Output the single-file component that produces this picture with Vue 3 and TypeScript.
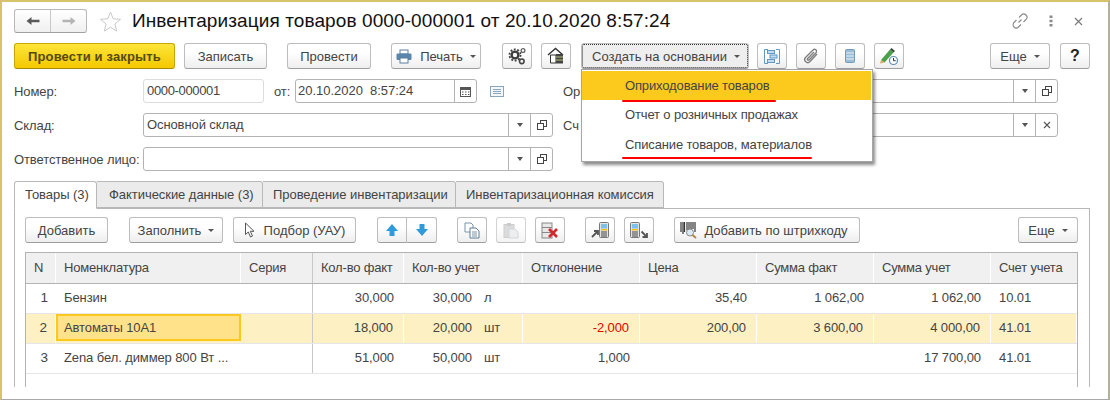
<script setup lang="ts">
interface Row {
  n: number
  name: string
  fact: string
  acc: string
  unit: string
  diff: string
  price: string
  sumF: string
  sumA: string
  account: string
  active?: boolean
}

const rows: Row[] = [
  { n: 1, name: 'Бензин', fact: '30,000', acc: '30,000', unit: 'л', diff: '', price: '35,40', sumF: '1 062,00', sumA: '1 062,00', account: '10.01' },
  { n: 2, name: 'Автоматы 10А1', fact: '18,000', acc: '20,000', unit: 'шт', diff: '-2,000', price: '200,00', sumF: '3 600,00', sumA: '4 000,00', account: '41.01', active: true },
  { n: 3, name: 'Zena бел. диммер 800 Вт ...', fact: '51,000', acc: '50,000', unit: 'шт', diff: '1,000', price: '', sumF: '', sumA: '17 700,00', account: '41.01' },
]
const heads = ['N', 'Номенклатура', 'Серия', 'Кол-во факт', 'Кол-во учет', 'Отклонение', 'Цена', 'Сумма факт', 'Сумма учет', 'Счет учета']
const tabs = ['Товары (3)', 'Фактические данные (3)', 'Проведение инвентаризации', 'Инвентаризационная комиссия']
</script>

<template>
  <div class="window">
    <header class="head">
      <div class="nav">
        <span class="nav-cell">
          <svg width="16" height="12" viewBox="0 0 16 12"><path d="M1.500 6 6.500 2V4.700H14.500V7.300H6.500V10Z" fill="#5a5a5a" /></svg>
        </span>
        <span class="nav-cell">
          <svg width="16" height="12" viewBox="0 0 16 12"><path d="M14.500 6 9.500 2V4.700H1.500V7.300H9.500V10Z" fill="#b4b4b4" /></svg>
        </span>
      </div>
      <svg class="star" width="23" height="23" viewBox="0 0 23 23"><path d="M11.500 2 14.200 8.800 21.500 9.300 15.900 14 17.700 21.100 11.500 17.200 5.300 21.100 7.100 14 1.500 9.300 8.800 8.800Z" fill="#fff" stroke="#c9c9c9" /></svg>
      <h1 class="title">Инвентаризация товаров 0000-000001 от 20.10.2020 8:57:24</h1>
      <div class="win-tools">
        <svg width="16" height="16" viewBox="0 0 16 16" fill="none" stroke="#8a8a8a" stroke-width="1.100"><path d="M6.500 9.500 9.500 6.500M7 4.500 9.500 2a2.800 2.800 0 0 1 4.500 4.500L11.500 9M9 11.500 6.500 14A2.800 2.800 0 0 1 2 9.500L4.500 7" /></svg>
        <svg class="dots" width="4" height="12" viewBox="0 0 4 12"><path d="M.5.500h3v2.500h-3zM.5 4.700h3v2.500h-3zM.5 8.900h3v2.500h-3z" fill="#8a8a8a" /></svg>
        <svg class="close" width="9" height="9" viewBox="0 0 9 9"><path d="M1 1 8 8M8 1 1 8" stroke="#777" stroke-width="1.100" /></svg>
      </div>
    </header>

    <div class="cmd">
      <button class="btn primary w161">Провести и закрыть</button>
      <button class="btn w83 g9">Записать</button>
      <button class="btn w84 g20">Провести</button>
      <button class="btn w90 g20">
        <svg width="16" height="15" viewBox="0 0 16 15"><rect x="4" y="1" width="8" height="4" fill="#fff" stroke="#5b7f9f" /><rect x=".5" y="4.500" width="15" height="6.500" rx="1" fill="#5b86ab" /><rect x="4" y="9" width="8" height="5" fill="#fff" stroke="#5b7f9f" /></svg>
        <span class="ico-label">Печать</span><i class="caret" />
      </button>
      <button class="btn icon g21">
        <svg width="18" height="18" viewBox="0 0 18 18"><circle cx="7" cy="8" r="3.400" fill="none" stroke="#3c3c3c" stroke-width="2.400" /><circle cx="7" cy="8" r="5.600" fill="none" stroke="#3c3c3c" stroke-width="1.700" stroke-dasharray="1.900 1.600" /><circle cx="15" cy="3.500" r="1.900" fill="none" stroke="#666" stroke-width="1.300" /><circle cx="13.800" cy="14.300" r="2.300" fill="none" stroke="#444" stroke-width="1.600" /></svg>
      </button>
      <button class="btn icon g9">
        <svg width="18" height="18" viewBox="0 0 18 18"><path d="M1 8 8.500 1.500 16 8" fill="none" stroke="#333" stroke-width="1.400" /><path d="M3.500 8V16H9V8Z" fill="#fff" stroke="#333" /><rect x="9" y="7" width="7" height="9.500" fill="#444" /><path d="M9 10h7M9 13h7" stroke="#b9c27a" /></svg>
      </button>
      <button class="btn create g10"><span>Создать на основании</span><i class="caret" /></button>
      <button class="btn icon g8">
        <svg width="16" height="15" viewBox="0 0 16 15" fill="none" stroke="#5f9ac8"><path d="M4 .5H.5V14.500H4M12 .5H15.500V14.500H12" /><rect x="3.500" y="1.500" width="7" height="3" fill="#c4dcef" /><rect x="6" y="6" width="7" height="3" fill="#c4dcef" /><rect x="3.500" y="10.500" width="7" height="3" fill="#c4dcef" /></svg>
      </button>
      <button class="btn icon g9">
        <svg width="18" height="18" viewBox="0 0 18 18" fill="none" stroke="#7e7e7e" stroke-width="1.300"><path d="M15 7 8 14.500a3 3 0 0 1-4.500-4L11 3a2 2 0 0 1 3 2.700L7 13a1 1 0 0 1-1.500-1.300L12 5" /></svg>
      </button>
      <button class="btn icon g9">
        <svg width="10" height="14" viewBox="0 0 10 14"><rect x=".5" y=".5" width="9" height="13" rx="1" fill="#9dbcd6" stroke="#6f9abb" /><path d="M1 4h8M1 7h8M1 10h8" stroke="#e8f0f6" stroke-width="1.100" /></svg>
      </button>
      <button class="btn icon g9">
        <svg width="20" height="19" viewBox="0 0 20 19"><path d="M2 13 11 2.500 14.500 5.500 5.500 15.500Z" fill="#4aa14a" /><path d="M2 13 1 16.500 5.500 15.500Z" fill="#d8a964" /><path d="M11 2.500 12.500 1 16 4 14.500 5.500Z" fill="#3b4a3b" /><circle cx="14.500" cy="13.500" r="4" fill="#fff" stroke="#5e8db3" stroke-width="1.200" /><path d="M14.500 11v2.700h2.200" fill="none" stroke="#333" /></svg>
      </button>
      <button class="btn w60 push"><span>Еще</span><i class="caret" /></button>
      <button class="btn icon g10 help">?</button>

      <div class="menu">
        <div class="menu-item on">Оприходование товаров</div>
        <div class="menu-item">Отчет о розничных продажах</div>
        <div class="menu-item">Списание товаров, материалов</div>
        <span class="mark mark-a" />
        <span class="mark mark-b" />
      </div>
    </div>

    <div class="form">
      <div class="line">
        <label class="lbl">Номер:</label>
        <div class="field plain num">0000-000001</div>
        <label class="from">от:</label>
        <div class="field date">
          <span class="val dateval">20.10.2020&nbsp; 8:57:24</span>
          <span class="fb cal">
            <svg width="13" height="13" viewBox="0 0 13 13"><rect x="1.500" y="2.500" width="10" height="9" fill="#fff" stroke="#555" /><rect x="1" y="2" width="11" height="3" fill="#555" /><path d="M3 7h1.500M6 7h1.500M9 7h1.500M3 9.500h1.500M6 9.500h1.500M9 9.500h1.500" stroke="#555" /></svg>
          </span>
        </div>
        <svg class="note" width="14" height="11" viewBox="0 0 14 11"><rect x=".5" y=".5" width="13" height="10" fill="#f4f7fa" stroke="#8ba5ba" /><path d="M3 3.500h8M3 5.500h8M3 7.500h8" stroke="#8ba5ba" /></svg>
        <label class="lbl2">Ор</label>
        <div class="field side">
          <span class="val" />
          <span class="fb w21"><i class="tri" /></span>
          <span class="fb w21">
            <svg width="10" height="10" viewBox="0 0 10 10" fill="#fff" stroke="#444"><rect x="3.500" y=".5" width="6" height="6" /><rect x=".5" y="3.500" width="6" height="6" /></svg>
          </span>
        </div>
      </div>
      <div class="line">
        <label class="lbl">Склад:</label>
        <div class="field main">
          <span class="val">Основной склад</span>
          <span class="fb w21"><i class="tri" /></span>
          <span class="fb w21">
            <svg width="10" height="10" viewBox="0 0 10 10" fill="#fff" stroke="#444"><rect x="3.500" y=".5" width="6" height="6" /><rect x=".5" y="3.500" width="6" height="6" /></svg>
          </span>
        </div>
        <label class="lbl2">Сч</label>
        <div class="field side">
          <span class="val" />
          <span class="fb w21"><i class="tri" /></span>
          <span class="fb w21">
            <svg width="8" height="8" viewBox="0 0 8 8"><path d="M1 1 7 7M7 1 1 7" stroke="#555" stroke-width="1.100" /></svg>
          </span>
        </div>
      </div>
      <div class="line">
        <label class="lbl">Ответственное лицо:</label>
        <div class="field main">
          <span class="val" />
          <span class="fb w21"><i class="tri" /></span>
          <span class="fb w21">
            <svg width="10" height="10" viewBox="0 0 10 10" fill="#fff" stroke="#444"><rect x="3.500" y=".5" width="6" height="6" /><rect x=".5" y="3.500" width="6" height="6" /></svg>
          </span>
        </div>
      </div>
    </div>

    <div class="tabs">
      <div v-for="(t, i) in tabs" :key="t" class="tab" :class="['tab' + i, { cur: i === 0 }]">{{ t }}</div>
    </div>

    <section class="panel">
      <div class="tools">
        <button class="btn w83">Добавить</button>
        <button class="btn w94 g21"><span>Заполнить</span><i class="caret" /></button>
        <button class="btn w123 g10">
          <svg width="12" height="16" viewBox="0 0 12 16"><path d="M1.500 1V12.500L4.300 10 6.500 15 8.500 14 6.300 9.300H10Z" fill="#fff" stroke="#555" /></svg>
          <span class="ico-label">Подбор (УАУ)</span>
        </button>
        <div class="pair g21">
          <button class="btn half">
            <svg width="14" height="14" viewBox="0 0 14 14"><path d="M7 1 13 8H9.500V13H4.500V8H1Z" fill="#2f9bdc" /></svg>
          </button>
          <button class="btn half joined">
            <svg width="14" height="14" viewBox="0 0 14 14"><path d="M7 13 13 6H9.500V1H4.500V6H1Z" fill="#2f9bdc" /></svg>
          </button>
        </div>
        <button class="btn icon g20">
          <svg width="16" height="17" viewBox="0 0 16 17"><path d="M1 1H7L9 3V10H1Z" fill="#fff" stroke="#7d93a6" /><path d="M6 6H12L15 9V16H6Z" fill="#fff" stroke="#5f7d96" /><path d="M8 10h5M8 12h5M8 14h5" stroke="#7d93a6" /></svg>
        </button>
        <button class="btn icon g9 off">
          <svg width="16" height="17" viewBox="0 0 16 17"><rect x="1" y="2.500" width="10" height="13" fill="#c9c9c9" stroke="#b5b5b5" /><rect x="4" y="1" width="4" height="3" fill="#b0b0b0" /><path d="M6 7H12L15 10V16H6Z" fill="#e3e6e9" stroke="#b9c0c6" /></svg>
        </button>
        <button class="btn icon g9">
          <svg width="18" height="17" viewBox="0 0 18 17"><rect x="1" y="1" width="10" height="15" fill="#e8e8e8" stroke="#888" /><path d="M1 5.500h10M1 10.500h10" stroke="#888" /><path d="M8 7 16 15M16 7 8 15" stroke="#d4282a" stroke-width="2.600" /></svg>
        </button>
        <button class="btn icon g20">
          <svg width="20" height="18" viewBox="0 0 20 18"><rect x="9.500" y="1.500" width="9" height="15" rx="1" fill="#e4e4e4" stroke="#777" /><rect x="11" y="3" width="6" height="4.500" fill="#7fc0e8" /><rect x="11" y="8" width="6" height="1.500" fill="#f0c020" /><path d="M11 11h6M11 13h6M11 15h6" stroke="#444" /><path d="M2 16 7.500 10.500M4 10H8V14" fill="none" stroke="#555" stroke-width="1.800" /></svg>
        </button>
        <button class="btn icon g9">
          <svg width="20" height="18" viewBox="0 0 20 18"><rect x="1.500" y="1.500" width="9" height="15" rx="1" fill="#e4e4e4" stroke="#777" /><rect x="3" y="3" width="6" height="4.500" fill="#7fc0e8" /><rect x="3" y="8" width="6" height="1.500" fill="#f0c020" /><path d="M3 11h6M3 13h6M3 15h6" stroke="#444" /><path d="M12.500 10.500 18 16M13.500 16H18V12" fill="none" stroke="#555" stroke-width="1.800" /></svg>
        </button>
        <button class="btn w186 g20">
          <svg width="18" height="18" viewBox="0 0 18 18"><path d="M1 1V11M3 1V13M4.500 1V11M7 1V9M9 1V8M11 1V8M13 1V8M15 1V11" stroke="#333" stroke-width="1.200" /><circle cx="10" cy="11.500" r="3.500" fill="#dbe9f3" stroke="#888" /><path d="M12.500 14 16 17" stroke="#b8863b" stroke-width="2" /></svg>
          <span class="ico-label tight">Добавить по штрихкоду</span>
        </button>
        <button class="btn w60 push"><span>Еще</span><i class="caret" /></button>
      </div>

      <div class="table">
        <div class="tr th">
          <div v-for="h in heads" :key="h" class="td">{{ h }}</div>
        </div>
        <div v-for="r in rows" :key="r.n" class="tr body" :class="{ active: r.active }">
          <div class="td right idx">{{ r.n }}</div>
          <div class="td name" :class="{ cursor: r.active }">{{ r.name }}</div>
          <div class="td" />
          <div class="td right">{{ r.fact }}</div>
          <div class="td acc"><span class="acc-num">{{ r.acc }}</span><span class="unit">{{ r.unit }}</span></div>
          <div class="td right" :class="{ neg: r.diff.startsWith('-') }">{{ r.diff }}</div>
          <div class="td right">{{ r.price }}</div>
          <div class="td right">{{ r.sumF }}</div>
          <div class="td right">{{ r.sumA }}</div>
          <div class="td">{{ r.account }}</div>
        </div>
      </div>
    </section>
  </div>
</template>

<style scoped>
.window {
  position: relative;
  box-sizing: border-box;
  width: 1110px;
  height: 400px;
  overflow: hidden;
  background: #fff;
  border-top: 2px solid #d6c36a;
  border-left: 2px solid #d6c36a;
  border-right: 2px solid #b4b09a;
  border-bottom: 1px solid #a8a8a8;
  padding: 7px 0 0 12px;
  font-family: "Liberation Sans", Arial, sans-serif;
  font-size: 13px;
  letter-spacing: -.1px;
  color: #444;
}
.head {
  display: flex;
  align-items: center;
  height: 24px;
  width: 1076px;
}
.nav {
  display: flex;
  box-sizing: border-box;
  width: 73px;
  height: 24px;
  border: 1px solid #b8b8b8;
  border-bottom-color: #a0a0a0;
  border-radius: 3px;
  background: linear-gradient(#fff, #f0f0f0);
}
.nav-cell {
  flex: 1;
  display: flex;
  align-items: center;
  justify-content: center;
}
.nav-cell + .nav-cell {
  border-left: 1px solid #c8c8c8;
}
.star {
  margin-left: 12px;
  flex: none;
}
.title {
  margin: 0 0 0 10px;
  font-size: 19px;
  font-weight: 400;
  letter-spacing: .1px;
  color: #111;
  white-space: nowrap;
}
.win-tools {
  display: flex;
  align-items: center;
  margin-left: auto;
  margin-right: 7px;
}
.dots {
  margin-left: 21px;
}
.close {
  margin-left: 21px;
}
.cmd {
  position: relative;
  display: flex;
  margin-top: 10px;
  width: 1076px;
  height: 26px;
}
.btn {
  display: inline-flex;
  align-items: center;
  justify-content: center;
  box-sizing: border-box;
  flex: none;
  height: 26px;
  padding: 0;
  font: inherit;
  letter-spacing: 0;
  color: #444;
  background: linear-gradient(#fff 35%, #eeeeee);
  border: 1px solid #bdbdbd;
  border-bottom-color: #9e9e9e;
  border-radius: 3px;
}
.primary {
  font-weight: 700;
  letter-spacing: .15px;
  color: #54490f;
  background: linear-gradient(#fde53a, #f5c800);
  border-color: #c8a608;
  border-bottom-color: #a88b05;
}
.w161 { width: 161px; }
.w83 { width: 83px; }
.w84 { width: 84px; }
.w90 { width: 90px; }
.w60 { width: 60px; }
.w94 { width: 94px; }
.w123 { width: 123px; }
.w186 { width: 186px; padding-right: 6px; }
.g8 { margin-left: 8px; }
.g9 { margin-left: 9px; }
.g10 { margin-left: 10px; }
.g20 { margin-left: 20px; }
.g21 { margin-left: 21px; }
.push { margin-left: auto; }
.icon { width: 30px; }
.help { font-size: 16px; font-weight: 700; color: #222; }
.create {
  width: 168px;
  padding-left: 2px;
  outline: 1px dotted #333;
  outline-offset: -2px;
  background: #eeeeee;
}
.ico-label { margin-left: 8px; }
.tight { margin-left: 6px; }
.caret {
  display: inline-block;
  width: 0;
  height: 0;
  margin-left: 7px;
  margin-top: 1px;
  border-left: 3px solid transparent;
  border-right: 3px solid transparent;
  border-top: 3px solid #555;
}
.menu {
  position: absolute;
  z-index: 5;
  left: 567px;
  top: 26px;
  box-sizing: border-box;
  width: 292px;
  height: 93px;
  padding: 1px 0 0;
  background: #fff;
  border: 1px solid #a6a6a6;
  box-shadow: 2px 3px 3px rgba(0, 0, 0, .45);
}
.menu-item {
  height: 30px;
  line-height: 30px;
  padding-left: 43px;
  letter-spacing: -.14px;
}
.menu-item.on {
  height: 29px;
  line-height: 29px;
  background: #fbca1d;
  margin-right: 1px;
}
.mark {
  position: absolute;
  left: 40px;
  height: 2px;
  background: #f00;
  border-radius: 1px;
}
.mark-a { top: 30px; width: 154px; }
.mark-b { top: 87px; width: 190px; }
.form {
  margin-top: 10px;
  display: flex;
  flex-direction: column;
  gap: 10px;
}
.line {
  display: flex;
  align-items: center;
  height: 24px;
}
.lbl {
  flex: none;
  width: 129px;
  white-space: nowrap;
}
.lbl2 {
  flex: none;
  width: 67px;
  margin-left: 10px;
}
.field {
  display: flex;
  box-sizing: border-box;
  flex: none;
  height: 24px;
  border: 1px solid #b3b3b3;
  border-radius: 3px;
  background: #fff;
}
.plain {
  border-color: #dcdcdc;
}
.num {
  width: 121px;
  padding-left: 3px;
  line-height: 22px;
  letter-spacing: -.35px;
}
.from {
  flex: none;
  width: 21px;
  margin-left: 10px;
}
.date {
  width: 182px;
}
.main {
  width: 410px;
}
.side {
  width: 428px;
}
.val {
  flex: 1;
  padding-left: 3px;
  line-height: 22px;
  white-space: nowrap;
}
.dateval {
  padding-left: 2px;
  letter-spacing: -.02px;
}
.fb {
  display: flex;
  align-items: center;
  justify-content: center;
  flex: none;
  border-left: 1px solid #b3b3b3;
}
.cal { width: 21px; }
.w21 { width: 21px; }
.tri {
  width: 0;
  height: 0;
  border-left: 3.500px solid transparent;
  border-right: 3.500px solid transparent;
  border-top: 4px solid #555;
}
.note {
  flex: none;
  margin-left: 13px;
  margin-right: 49px;
}
.tabs {
  display: flex;
  margin-top: 10px;
  height: 27px;
}
.tab {
  box-sizing: border-box;
  height: 27px;
  padding: 0 0 0 10px;
  line-height: 26px;
  letter-spacing: -.05px;
  white-space: nowrap;
  background: #ebebeb;
  border: 1px solid #b8b8b8;
  border-left: 0;
  border-radius: 0 3px 0 0;
}
.tab1 { width: 166px; padding-left: 12px; }
.tab2 { width: 193px; }
.tab3 { width: 208px; }
.tab.cur {
  width: 83px;
  padding-left: 10px;
  background: #fff;
  border-left: 1px solid #b8b8b8;
  border-bottom-color: #fff;
  border-radius: 3px 3px 0 0;
  margin-bottom: -1px;
  height: 28px;
  position: relative;
  z-index: 1;
}
.panel {
  box-sizing: border-box;
  width: 1076px;
  height: 179px;
  padding: 8px 11px 0 10px;
  border: 1px solid #b8b8b8;
  border-bottom: 0;
}
.tools {
  display: flex;
}
.pair {
  display: flex;
  flex: none;
}
.half {
  width: 30px;
  border-radius: 3px 0 0 3px;
}
.joined {
  border-left: 0;
  border-radius: 0 3px 3px 0;
}
.off {
  opacity: .65;
}
.table {
  box-sizing: border-box;
  margin-top: 9px;
  width: 1053px;
  height: 135px;
  border: 1px solid #b3b3b3;
  border-bottom: 0;
}
.tr {
  display: grid;
  grid-template-columns: 30px 185px 72px 91px 119px 117px 117px 117px 117px 86px;
}
.th {
  height: 30px;
  background: #f0f0f0;
  border-bottom: 1px solid #b3b3b3;
  line-height: 29px;
}
.th .td {
  border-right: 1px solid #fff;
  letter-spacing: -.2px;
}
.th .td:nth-child(3) {
  border-right-color: #c8c8c8;
}
.th .td:first-child {
  padding-left: 8px;
}
.td {
  box-sizing: border-box;
  padding: 0 8px;
  white-space: nowrap;
  overflow: hidden;
}
.td:last-child {
  border-right: 0;
}
.body {
  height: 29px;
  line-height: 28px;
  border-bottom: 1px solid #e6e6e6;
}
.body .td:nth-child(3) {
  border-right: 1px solid #c8c8c8;
}
.right {
  text-align: right;
  padding-right: 10px;
}
.idx {
  padding-right: 8px;
  font-size: 13.500px;
}
.active {
  background: #fdf0c3;
}
.active .td {
  border-right: 1px solid #fff;
}
.active .td:nth-child(3) {
  border-right-color: #c8c8c8;
}
.cursor {
  box-sizing: border-box;
  background: #ffe28a;
  border: 2px solid #fac81e !important;
  line-height: 23px;
  height: 27px;
  padding-left: 6px;
}
.neg {
  color: #e00000;
}
.acc {
  display: flex;
}
.acc-num {
  width: 60px;
  text-align: right;
}
.unit {
  margin-left: 12px;
}
</style>
